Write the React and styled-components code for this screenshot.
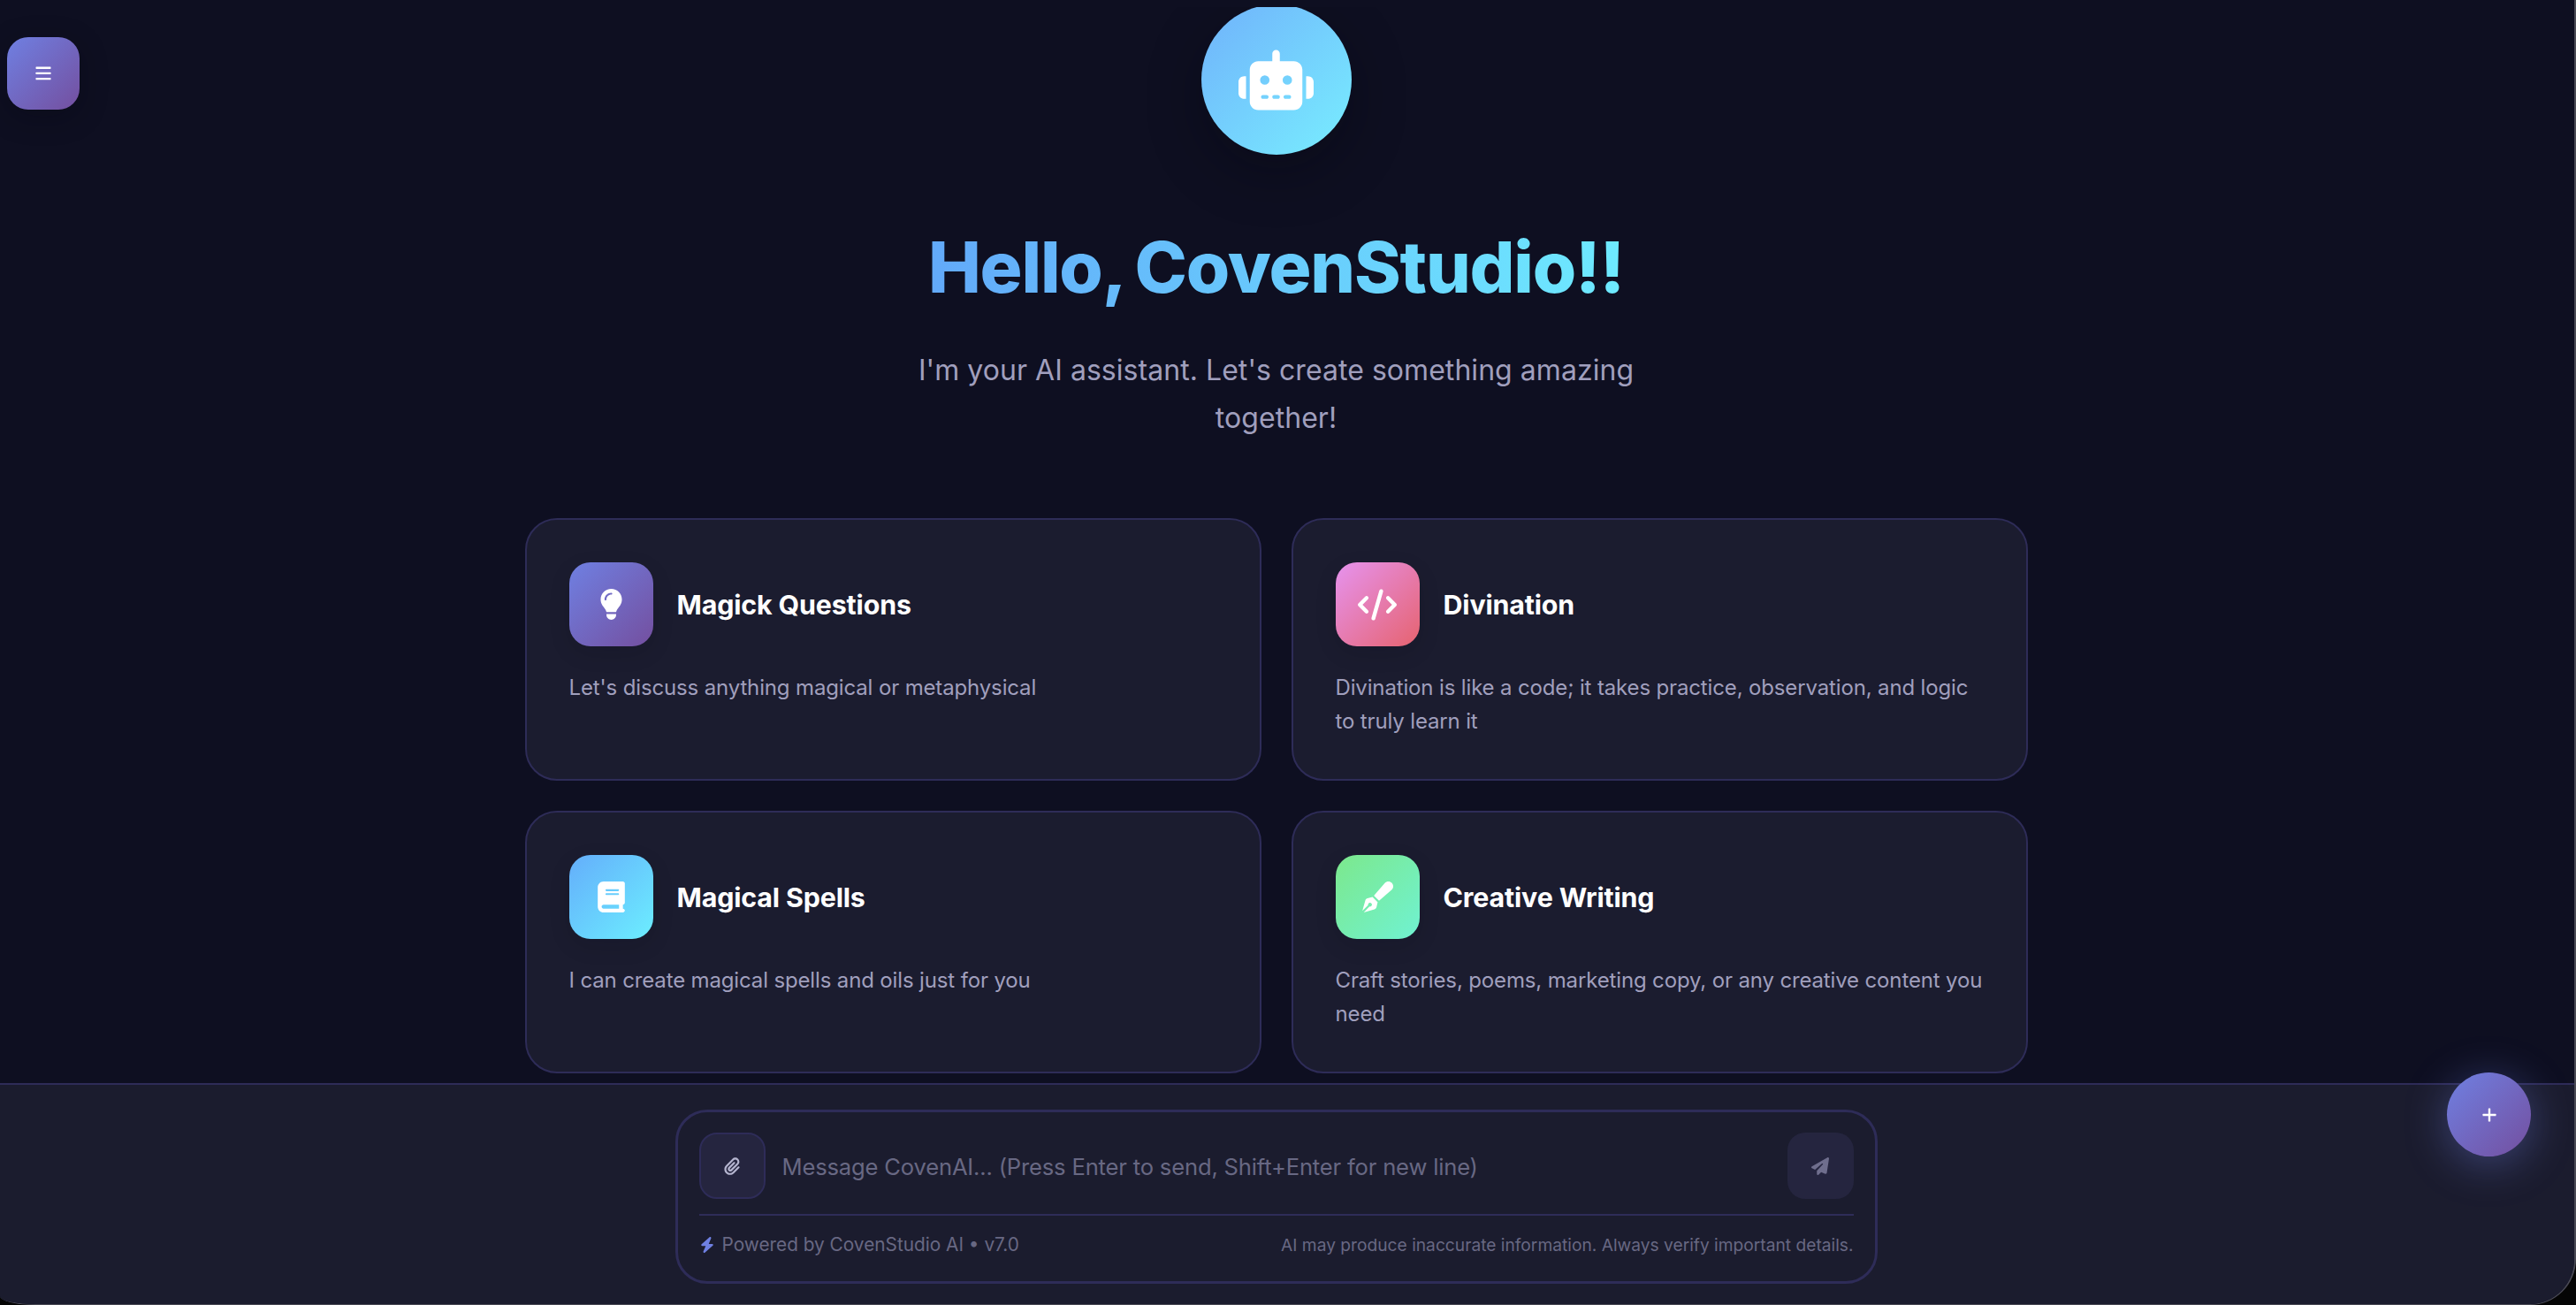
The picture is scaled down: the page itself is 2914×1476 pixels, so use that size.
import React from "react";
import styled, { createGlobalStyle } from "styled-components";
import { FaRobot, FaLightbulb, FaCode, FaBook, FaPenFancy, FaPaperclip, FaPaperPlane, FaBolt } from "react-icons/fa6";

const Global = createGlobalStyle`
  html, body { margin: 0; padding: 0; background: #050505; }
  body { font-family: Inter, "Noto Sans", sans-serif; }
  * { box-sizing: border-box; }
`;

const brand = "linear-gradient(135deg, #6f80e2 0%, #744f9f 100%)";

const Window = styled.div`
  position: relative;
  width: 2914px;
  height: 1476px;
  overflow: hidden;
  display: flex;
  flex-direction: column;
  background: #0e0f21;
  border-right: 2px solid #4a4a55;
  border-bottom: 1px solid #4a4a55;
  border-bottom-right-radius: 52px;
  border-bottom-left-radius: 40px 10px;
`;

const Main = styled.main`
  flex: 1;
  min-height: 0;
  margin-top: 8px;
  padding-right: 25px;
  overflow: hidden;
  display: flex;
  flex-direction: column;
  align-items: center;
`;

const Avatar = styled.div`
  flex: none;
  width: 170px;
  height: 170px;
  margin-top: -3px;
  border-radius: 50%;
  background: linear-gradient(135deg, #70b2fb 0%, #78eeff 100%);
  box-shadow: 0 20px 60px rgba(5, 5, 15, 0.35);
  display: flex;
  align-items: center;
  justify-content: center;
  color: #fff;
  font-size: 85px;
`;

const Title = styled.h1`
  margin: 79px 0 0;
  font-size: 80px;
  line-height: 96px;
  font-weight: 800;
  letter-spacing: -1.2px;
  word-spacing: -3px;
  background: linear-gradient(90deg, #62a9f9 0%, #6eeaff 100%);
  -webkit-background-clip: text;
  background-clip: text;
  color: transparent;
`;

const Subtitle = styled.p`
  margin: 42px 0 0;
  width: 900px;
  text-align: center;
  font-size: 32px;
  line-height: 54px;
  letter-spacing: 0.05px;
  color: #a09fbd;
`;

const Grid = styled.div`
  flex: none;
  margin-top: 86px;
  width: 1700px;
  display: grid;
  grid-template-columns: 1fr 1fr;
  gap: 34px;
`;

const Card = styled.article`
  height: 297px;
  padding: 48px 44px 48px 48px;
  background: #1b1c2f;
  border: 2px solid #2e2c58;
  border-radius: 36px;
`;

const CardHead = styled.div`
  display: flex;
  align-items: center;
  gap: 27px;
  margin-bottom: 28px;
`;

const CardIcon = styled.div`
  flex: none;
  width: 95px;
  height: 95px;
  border-radius: 24px;
  background: ${(p) => p.$bg};
  box-shadow: 0 8px 24px rgba(8, 8, 20, 0.12);
  color: #fff;
  font-size: ${(p) => p.$size}px;
  display: flex;
  align-items: center;
  justify-content: center;
`;

const CardTitle = styled.h3`
  margin: 0;
  font-size: 30.4px;
  line-height: 40px;
  font-weight: 700;
  letter-spacing: -0.005em;
  color: #fff;
`;

const CardText = styled.p`
  margin: 0;
  font-size: 24px;
  line-height: 38px;
  letter-spacing: -0.006em;
  color: #a09fbd;
`;

const Bottom = styled.footer`
  flex: none;
  height: 250px;
  padding: 28px 25px 0 0;
  background: #1b1c2e;
  border-top: 2px solid #2e2c58;
  display: flex;
  justify-content: center;
`;

const InputBox = styled.div`
  width: 1360px;
  height: 197px;
  padding: 24px 24px 0;
  border: 3px solid #2e2c58;
  border-radius: 36px;
  background: #1b1c2e;
`;

const InputRow = styled.div`
  display: flex;
  align-items: center;
  height: 93px;
  padding-bottom: 18px;
  border-bottom: 2px solid #2e2c58;
  gap: 19px;
`;

const SquareButton = styled.button`
  flex: none;
  width: 75px;
  height: 75px;
  padding: 0;
  border-radius: 20px;
  border: ${(p) => (p.$outlined ? "2px solid #2e2c58" : "none")};
  background: #25253f;
  color: ${(p) => (p.$outlined ? "#b5b5cf" : "#6f6e8d")};
  font-size: 20px;
  display: flex;
  align-items: center;
  justify-content: center;
`;

const Placeholder = styled.span`
  flex: 1;
  padding-top: 2px;
  font-size: 25.6px;
  letter-spacing: -0.007em;
  color: #686883;
`;

const MetaRow = styled.div`
  display: flex;
  align-items: center;
  justify-content: space-between;
  height: 65px;
`;

const Powered = styled.span`
  display: flex;
  align-items: center;
  gap: 8px;
  font-size: 20.8px;
  color: #686883;
  & svg { color: #6f80e2; font-size: 18px; }
`;

const Disclaimer = styled.span`
  font-size: 19.2px;
  color: #686883;
`;

const MenuButton = styled.button`
  position: absolute;
  left: 8px;
  top: 42px;
  width: 82px;
  height: 82px;
  padding: 0;
  border: none;
  border-radius: 24px;
  background: ${brand};
  box-shadow: 0 8px 32px rgba(5, 5, 15, 0.3);
  display: flex;
  align-items: center;
  justify-content: center;
`;

const Fab = styled.button`
  position: absolute;
  left: 2768px;
  top: 1213px;
  width: 95px;
  height: 95px;
  padding: 0;
  border: none;
  border-radius: 50%;
  background: ${brand};
  box-shadow: 0 8px 48px rgba(111, 128, 226, 0.4);
  display: flex;
  align-items: center;
  justify-content: center;
`;

const cards = [
  { title: "Magick Questions", text: "Let's discuss anything magical or metaphysical", icon: <FaLightbulb />, size: 35, bg: brand },
  { title: "Divination", text: "Divination is like a code; it takes practice, observation, and logic to truly learn it", icon: <FaCode />, size: 44, bg: "linear-gradient(135deg, #e693ef 0%, #e6636f 100%)" },
  { title: "Magical Spells", text: "I can create magical spells and oils just for you", icon: <FaBook />, size: 35, bg: "linear-gradient(135deg, #64aefb 0%, #6ceeff 100%)" },
  { title: "Creative Writing", text: "Craft stories, poems, marketing copy, or any creative content you need", icon: <FaPenFancy />, size: 35, bg: "linear-gradient(135deg, #7ce88c 0%, #70f2d2 100%)" },
];

export default function App() {
  return (
    <Window>
      <Global />
      <Main>
        <Avatar><FaRobot /></Avatar>
        <Title>Hello, CovenStudio!!</Title>
        <Subtitle>I'm your AI assistant. Let's create something amazing together!</Subtitle>
        <Grid>
          {cards.map((c) => (
            <Card key={c.title}>
              <CardHead>
                <CardIcon $bg={c.bg} $size={c.size}>{c.icon}</CardIcon>
                <CardTitle>{c.title}</CardTitle>
              </CardHead>
              <CardText>{c.text}</CardText>
            </Card>
          ))}
        </Grid>
      </Main>
      <Bottom>
        <InputBox>
          <InputRow>
            <SquareButton $outlined><FaPaperclip /></SquareButton>
            <Placeholder>Message CovenAI... (Press Enter to send, Shift+Enter for new line)</Placeholder>
            <SquareButton><FaPaperPlane /></SquareButton>
          </InputRow>
          <MetaRow>
            <Powered><FaBolt />Powered by CovenStudio AI • v7.0</Powered>
            <Disclaimer>AI may produce inaccurate information. Always verify important details.</Disclaimer>
          </MetaRow>
        </InputBox>
      </Bottom>
      <MenuButton>
        <svg width="18" height="16" viewBox="0 0 18 16" fill="#fff"><rect x="0.5" y="0.5" width="17" height="2.4" rx="0.6" /><rect x="0.5" y="6.7" width="17" height="2.4" rx="0.6" /><rect x="0.5" y="12.9" width="17" height="2.4" rx="0.6" /></svg>
      </MenuButton>
      <Fab>
        <svg width="16" height="16" viewBox="0 0 16 16" fill="#fff"><rect x="0.5" y="6.8" width="15" height="2.4" rx="0.5" /><rect x="6.8" y="0.5" width="2.4" height="15" rx="0.5" /></svg>
      </Fab>
    </Window>
  );
}
